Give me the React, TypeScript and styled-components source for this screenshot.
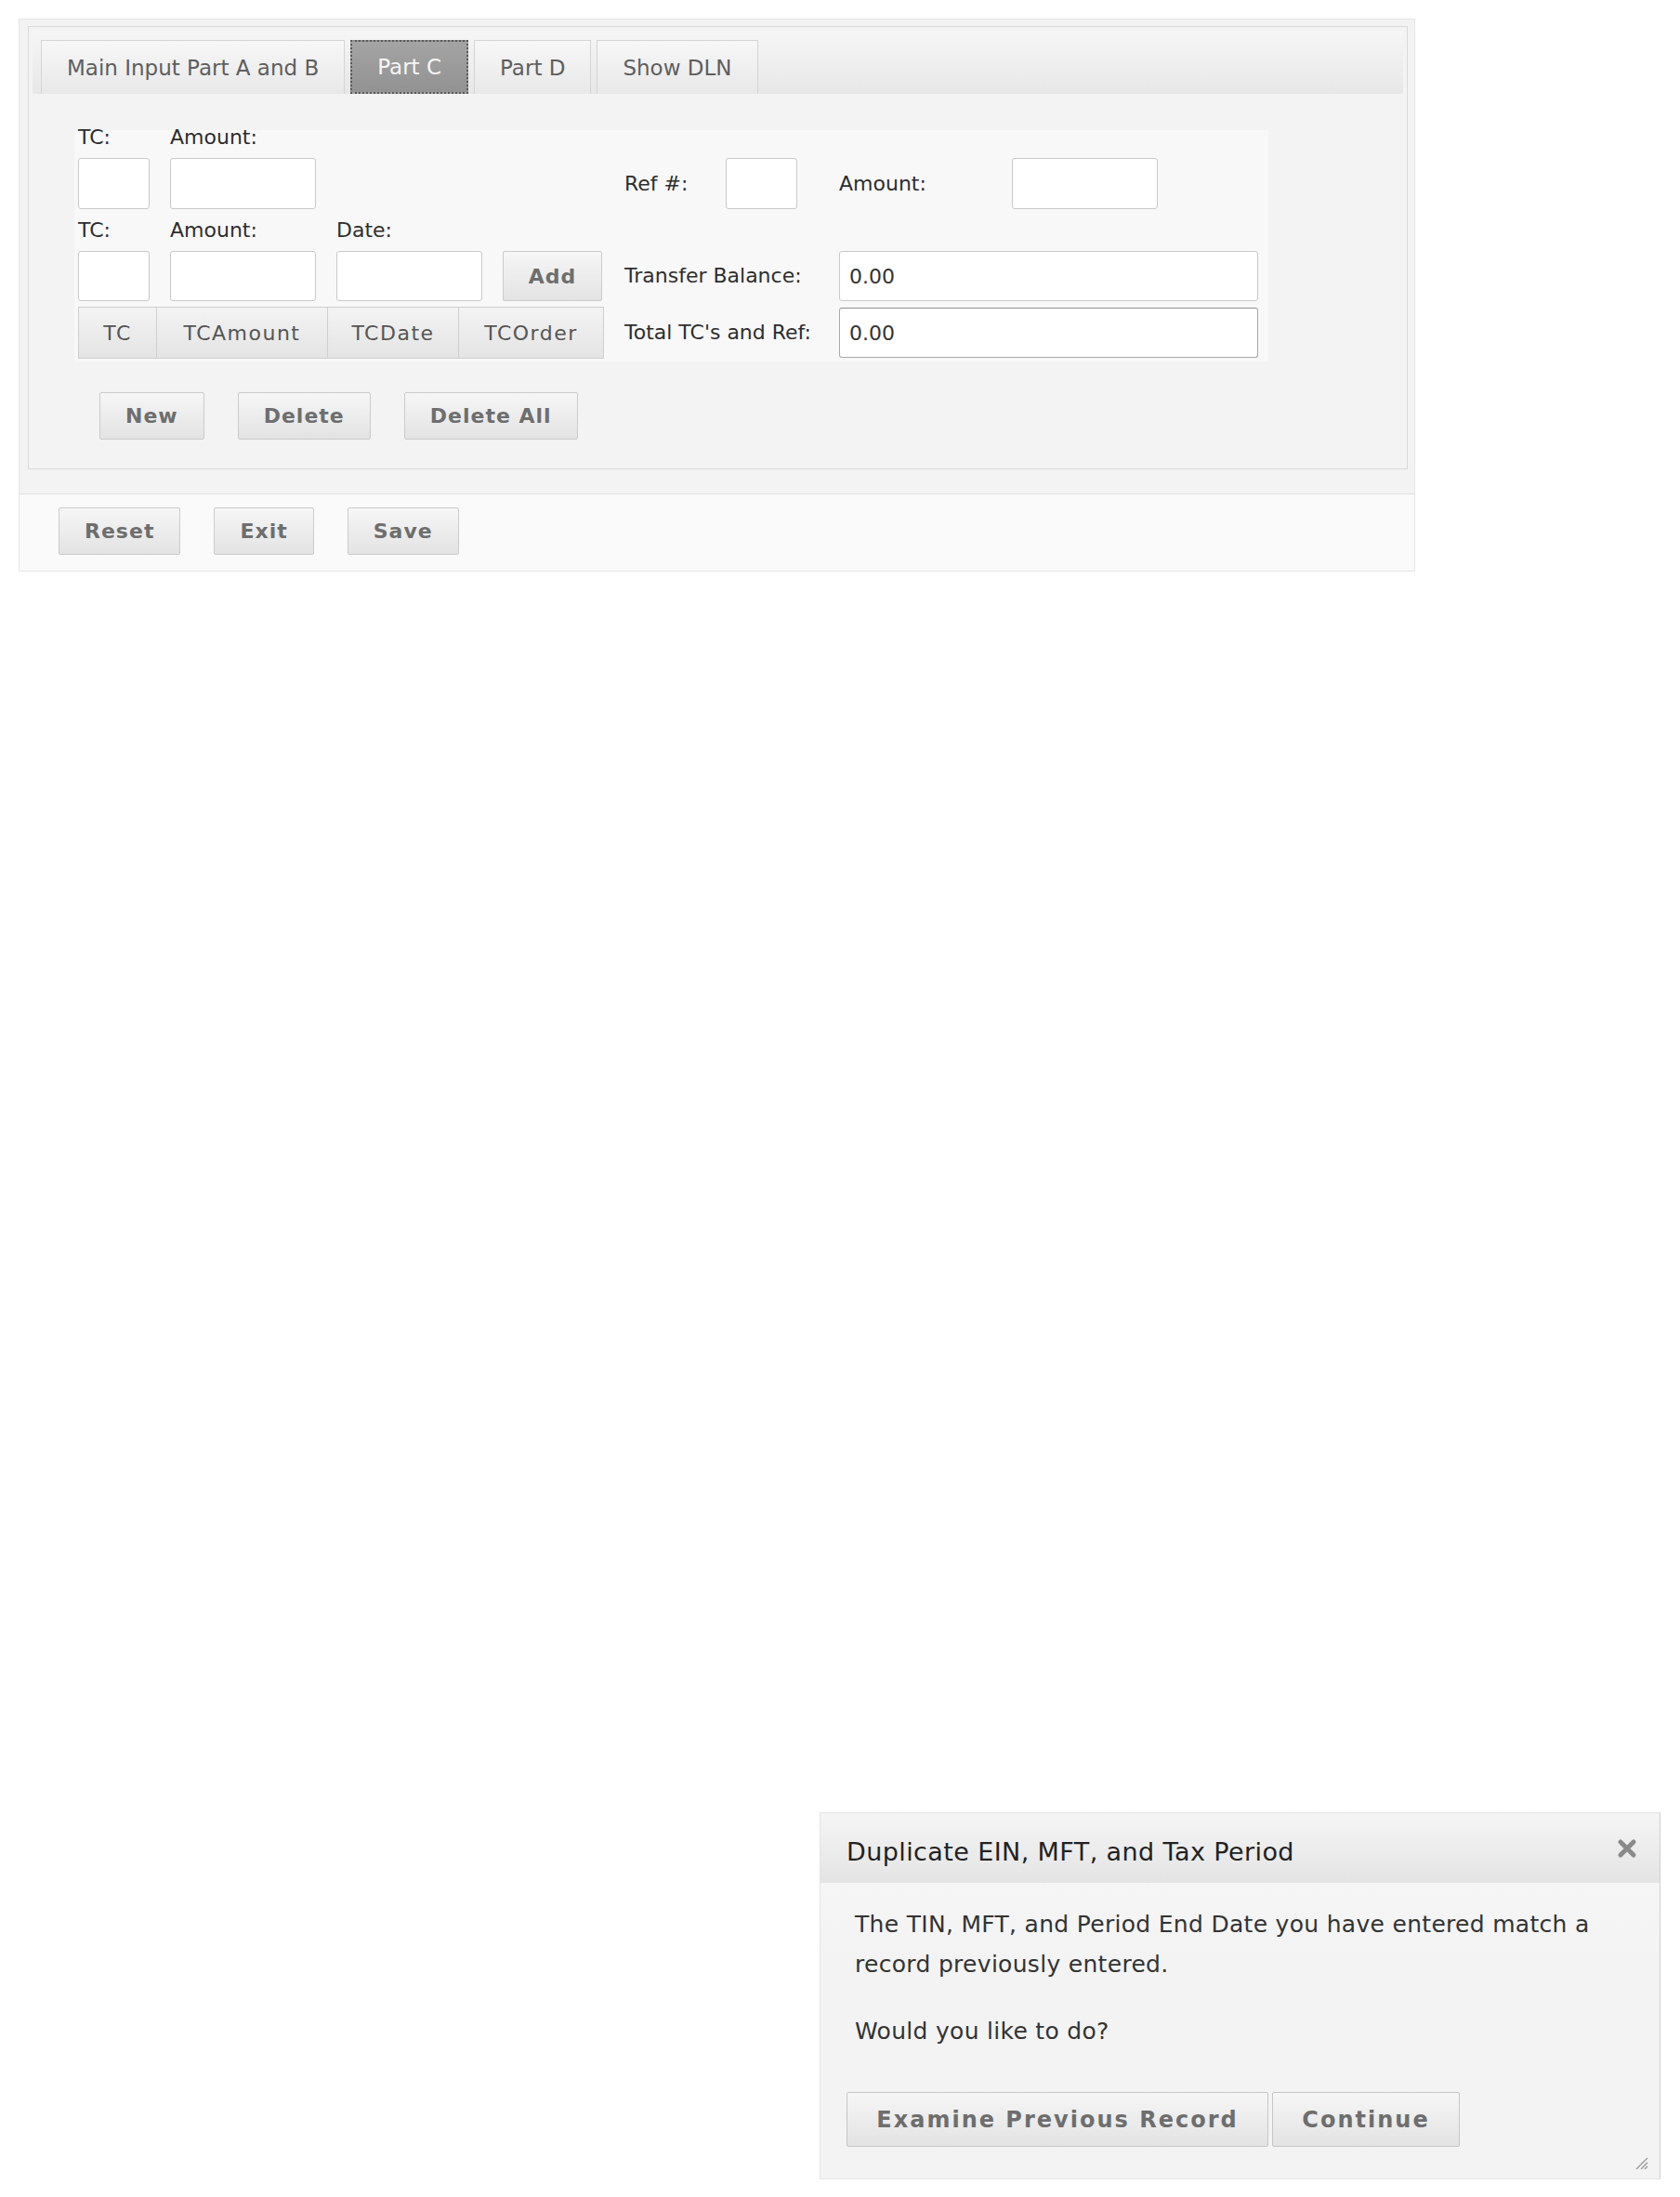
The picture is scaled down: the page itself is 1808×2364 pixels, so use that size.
import styled, { createGlobalStyle, css } from 'styled-components';

const GlobalStyle = createGlobalStyle`
  html, body {
    margin: 0;
    padding: 0;
    background: #ffffff;
  }
  body {
    position: relative;
    min-height: 2364px;
    font-family: "DejaVu Sans", Verdana, sans-serif;
  }
`;

const Outer = styled.div`
  margin: 20px 0 0 20px;
  width: 1503px;
  box-sizing: border-box;
  border: 1px solid #e5e5e5;
  background: #f3f3f3;
`;

const TopArea = styled.div`
  padding: 7px 7px 26px 9px;
`;

const TabPanel = styled.div`
  border: 1px solid #dadada;
  background: #f3f3f3;
  padding: 4px;
`;

const TabNav = styled.div`
  height: 68px;
  box-sizing: border-box;
  padding: 10px 0 0 9px;
  display: flex;
  align-items: flex-end;
  gap: 6px;
  background: linear-gradient(#f6f6f6, #e7e7e7);
  border-radius: 2px;
`;

const Tab = styled.div<{ $active?: boolean }>`
  height: 58px;
  box-sizing: border-box;
  padding: 0 27px;
  display: flex;
  align-items: center;
  font-size: 23px;
  color: #5e5e5e;
  white-space: nowrap;
  border: 1px solid #d4d4d4;
  border-bottom: none;
  background: linear-gradient(#f7f7f7, #e8e8e8);
  ${p =>
    p.$active &&
    css`
      color: #f6f6f6;
      border: 2px dotted #5a5a5a;
      background: linear-gradient(#a4a4a4, #929292);
    `}
`;

const Fields = styled.div`
  margin: 39px 0 0 45px;
  width: 1285px;
  height: 249px;
  box-sizing: border-box;
  padding-left: 4px;
  background: #f8f8f8;
  display: flex;
  gap: 24px;
`;

const LeftGrid = styled.div`
  display: grid;
  grid-template-columns: 77px 157px 157px 107px;
  grid-template-rows: 30px 55px 45px 54px 6px 56px;
  column-gap: 22px;
  grid-template-areas:
    "l1 l2 . ."
    "i1 i2 . ."
    "l3 l4 l5 ."
    "i3 i4 i5 add"
    ". . . ."
    "hdr hdr hdr hdr";
`;

const RightGrid = styled.div`
  display: grid;
  grid-template-columns: 109px 122px 186px 265px;
  grid-template-rows: 30px 55px 45px 54px 7px 54px;
  grid-template-areas:
    ". . . ."
    "rl ri al ai"
    ". . . ."
    "tl tl ti ti"
    ". . . ."
    "ol ol oi oi";
`;

const Label = styled.div<{ $area: string; $top?: boolean }>`
  grid-area: ${p => p.$area};
  align-self: ${p => (p.$top ? 'start' : 'center')};
  font-size: 22px;
  line-height: 16px;
  color: #2e2e2e;
  white-space: nowrap;
`;

const Field = styled.input<{ $area: string; $w: number; $dark?: boolean }>`
  grid-area: ${p => p.$area};
  width: ${p => p.$w}px;
  height: 100%;
  box-sizing: border-box;
  margin: 0;
  padding: 0 10px;
  border: 1px solid ${p => (p.$dark ? '#a8a8a8' : '#c9c9c9')};
  ${p => p.$dark && 'border-top-color: #8f8f8f;'}
  border-radius: 3px;
  background: #ffffff;
  font-family: "DejaVu Sans", Verdana, sans-serif;
  font-size: 22px;
  color: #333;
  outline: none;
`;

const buttonLook = css`
  box-sizing: border-box;
  margin: 0;
  border: 1px solid #cbcbcb;
  border-radius: 2px;
  background: linear-gradient(#f6f6f6, #e3e3e3);
  font-family: "DejaVu Sans", Verdana, sans-serif;
  font-weight: bold;
  color: #6e6e6e;
  white-space: nowrap;
  cursor: pointer;
`;

const AddButton = styled.button`
  ${buttonLook};
  grid-area: add;
  height: 100%;
  font-size: 22px;
  letter-spacing: 1px;
`;

const GridHeader = styled.div`
  grid-area: hdr;
  display: flex;
  width: 566px;
  box-sizing: border-box;
  border: 1px solid #cfcfcf;
  background: linear-gradient(#f3f3f3, #e4e4e4);
`;

const HeaderCell = styled.div<{ $w?: number }>`
  ${p => (p.$w ? `width: ${p.$w}px;` : 'flex: 1;')}
  display: flex;
  align-items: center;
  justify-content: center;
  font-size: 22px;
  letter-spacing: 1.5px;
  color: #555;
  & + & {
    border-left: 1px solid #cfcfcf;
  }
`;

const ButtonRow = styled.div`
  display: flex;
  gap: 36px;
  margin: 33px 0 27px 72px;
`;

const Btn = styled.button`
  ${buttonLook};
  height: 51px;
  padding: 0 27px;
  font-size: 22px;
  letter-spacing: 1px;
`;

const Footer = styled.div`
  border-top: 1px solid #e1e1e1;
  background: #fafafa;
  padding: 14px 0 17px 42px;
  display: flex;
  gap: 36px;
`;

const Dialog = styled.div`
  position: absolute;
  left: 882px;
  top: 1950px;
  width: 905px;
  height: 395px;
  box-sizing: border-box;
  border: 1px solid #e4e4e4;
  border-right-color: #cfcfcf;
  background: linear-gradient(#f8f8f8, #f3f3f3 40%);
`;

const TitleBar = styled.div`
  height: 75px;
  box-sizing: border-box;
  padding: 0 23px 0 28px;
  display: flex;
  align-items: center;
  justify-content: space-between;
  background: linear-gradient(#f5f5f5, #e4e4e4);
`;

const Title = styled.span`
  margin-top: 8px;
  font-size: 27px;
  letter-spacing: 0.4px;
  color: #222;
`;

const CloseIcon = styled.svg`
  display: block;
`;

const DialogBody = styled.div`
  padding: 23px 20px 0 37px;
  font-size: 25px;
  letter-spacing: 0.3px;
  line-height: 43px;
  color: #333;
  white-space: nowrap;
`;

const Para = styled.p<{ $gap?: number }>`
  margin: ${p => p.$gap ?? 0}px 0 0;
`;

const ButtonPane = styled.div`
  display: flex;
  gap: 4px;
  margin: 44px 0 0 28px;
`;

const DialogBtn = styled.button<{ $w: number }>`
  ${buttonLook};
  width: ${p => p.$w}px;
  height: 59px;
  padding: 0;
  font-size: 24px;
  letter-spacing: 2px;
  border-color: #c6c6c6;
`;

const Grip = styled.svg`
  position: absolute;
  right: 12px;
  bottom: 9px;
`;

export default function App() {
  return (
    <>
      <GlobalStyle />
      <Outer>
        <TopArea>
          <TabPanel>
            <TabNav>
              <Tab>Main Input Part A and B</Tab>
              <Tab $active>Part C</Tab>
              <Tab>Part D</Tab>
              <Tab>Show DLN</Tab>
            </TabNav>

            <Fields>
              <LeftGrid>
                <Label $area="l1" $top>TC:</Label>
                <Label $area="l2" $top>Amount:</Label>
                <Field $area="i1" $w={77} />
                <Field $area="i2" $w={157} />
                <Label $area="l3">TC:</Label>
                <Label $area="l4">Amount:</Label>
                <Label $area="l5">Date:</Label>
                <Field $area="i3" $w={77} />
                <Field $area="i4" $w={157} />
                <Field $area="i5" $w={157} />
                <AddButton>Add</AddButton>
                <GridHeader>
                  <HeaderCell $w={83}>TC</HeaderCell>
                  <HeaderCell $w={183}>TCAmount</HeaderCell>
                  <HeaderCell $w={140}>TCDate</HeaderCell>
                  <HeaderCell>TCOrder</HeaderCell>
                </GridHeader>
              </LeftGrid>

              <RightGrid>
                <Label $area="rl">Ref #:</Label>
                <Field $area="ri" $w={77} />
                <Label $area="al">Amount:</Label>
                <Field $area="ai" $w={157} />
                <Label $area="tl">Transfer Balance:</Label>
                <Field $area="ti" $w={451} defaultValue="0.00" />
                <Label $area="ol">Total TC's and Ref:</Label>
                <Field $area="oi" $w={451} $dark defaultValue="0.00" />
              </RightGrid>
            </Fields>

            <ButtonRow>
              <Btn>New</Btn>
              <Btn>Delete</Btn>
              <Btn>Delete All</Btn>
            </ButtonRow>
          </TabPanel>
        </TopArea>

        <Footer>
          <Btn>Reset</Btn>
          <Btn>Exit</Btn>
          <Btn>Save</Btn>
        </Footer>
      </Outer>

      <Dialog>
        <TitleBar>
          <Title>Duplicate EIN, MFT, and Tax Period</Title>
          <CloseIcon width="24" height="24" viewBox="0 0 24 24">
            <path d="M5 5 L19 19 M19 5 L5 19" stroke="#8a8a8a" strokeWidth="5" strokeLinecap="round" />
          </CloseIcon>
        </TitleBar>
        <DialogBody>
          <Para>
            The TIN, MFT, and Period End Date you have entered match a
            <br />
            record previously entered.
          </Para>
          <Para $gap={29}>Would you like to do?</Para>
        </DialogBody>
        <ButtonPane>
          <DialogBtn $w={454}>Examine Previous Record</DialogBtn>
          <DialogBtn $w={202}>Continue</DialogBtn>
        </ButtonPane>
        <Grip width="18" height="18" viewBox="0 0 18 18">
          <path d="M17 5 L5 17 M17 10 L10 17 M17 14 L14 17" stroke="#9a9a9a" strokeWidth="1.4" />
        </Grip>
      </Dialog>
    </>
  );
}
